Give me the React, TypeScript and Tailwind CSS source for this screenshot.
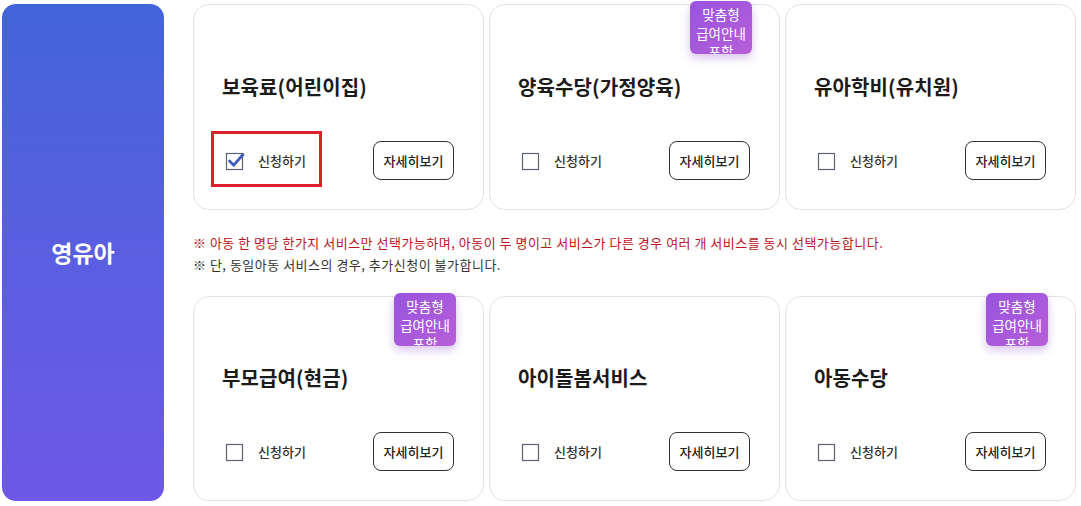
import React from 'react';

type Service = {
  title: string;
  badge?: boolean;
  checked?: boolean;
  highlight?: boolean;
};

const topRow: Service[] = [
  { title: '보육료(어린이집)', checked: true, highlight: true },
  { title: '양육수당(가정양육)', badge: true },
  { title: '유아학비(유치원)' },
];

const bottomRow: Service[] = [
  { title: '부모급여(현금)', badge: true },
  { title: '아이돌봄서비스' },
  { title: '아동수당', badge: true },
];

function CheckBox({ checked }: { checked?: boolean }) {
  return (
    <svg width="20" height="20" viewBox="0 0 20 20" className="shrink-0 overflow-visible">
      <rect x="1.5" y="2.5" width="16" height="16" fill="#fff" stroke="#5c6178" strokeWidth="1.2" />
      {checked && (
        <path d="M4.5 10 L8.8 14.2 L18 3.5" fill="none" stroke="#3f5cbd" strokeWidth="2.8" strokeLinecap="round" strokeLinejoin="round" />
      )}
    </svg>
  );
}

function ServiceCard({ service }: { service: Service }) {
  return (
    <div className="relative h-full bg-white border border-[#e2e2e2] rounded-[16px] flex flex-col justify-end px-[28px] pb-[29px]">
      {service.badge && (
        <div className="absolute -top-[4px] right-[27px] w-[62px] h-[53px] overflow-hidden rounded-[6px] bg-gradient-to-br from-[#9953df] to-[#b65ed8] shadow-[0_4px_10px_rgba(140,80,200,0.35)] text-white text-[13.5px] leading-[18.5px] text-center pt-[4px]">
          맞춤형
          <br />
          급여안내
          <br />
          포함
        </div>
      )}
      <h3 className="text-[20px] font-bold text-[#1b1b1b] tracking-[0.1px] leading-[28px] mb-[40px]">
        {service.title}
      </h3>
      <div className="flex items-center justify-between">
        <label className="relative flex items-center gap-[13px] pl-[3px]">
          <CheckBox checked={service.checked} />
          <span className="text-[13px] font-medium text-[#333]">신청하기</span>
          {service.highlight && (
            <span className="absolute -left-[11px] -top-[20px] w-[111px] h-[56px] border-[3px] border-[#df1f2a]" />
          )}
        </label>
        <button className="w-[81px] h-[39px] border border-[#333] rounded-[8px] bg-white text-[13px] font-medium text-[#222] mr-[1px]">
          자세히보기
        </button>
      </div>
    </div>
  );
}

export default function App() {
  return (
    <div
      className="w-[1081px] h-[506px] bg-white flex pl-[2px] pt-[4px] pb-[5px] overflow-hidden"
      style={{ fontFamily: '"Noto Sans CJK KR", "Noto Sans", sans-serif' }}
    >
      {/* Category */}
      <div className="w-[162px] shrink-0 rounded-[14px] bg-gradient-to-b from-[#4264d9] to-[#6d58e7] flex items-center justify-center">
        <span className="text-white text-[23px] font-bold">영유아</span>
      </div>

      {/* Services */}
      <div className="ml-[29px] w-[883px] flex flex-col">
        <div className="grid grid-cols-3 gap-[5px] h-[206px]">
          {topRow.map((s) => (
            <ServiceCard key={s.title} service={s} />
          ))}
        </div>

        <div className="pt-[22px] pb-[20px] text-[13px] leading-[22px] tracking-[0.5px] whitespace-nowrap">
          <p className="text-[#bc141c]">
            ※ 아동 한 명당 한가지 서비스만 선택가능하며, 아동이 두 명이고 서비스가 다른 경우 여러 개 서비스를 동시 선택가능합니다.
          </p>
          <p className="text-[#333]">※ 단, 동일아동 서비스의 경우, 추가신청이 불가합니다.</p>
        </div>

        <div className="grid grid-cols-3 gap-[5px] h-[205px]">
          {bottomRow.map((s) => (
            <ServiceCard key={s.title} service={s} />
          ))}
        </div>
      </div>
    </div>
  );
}
